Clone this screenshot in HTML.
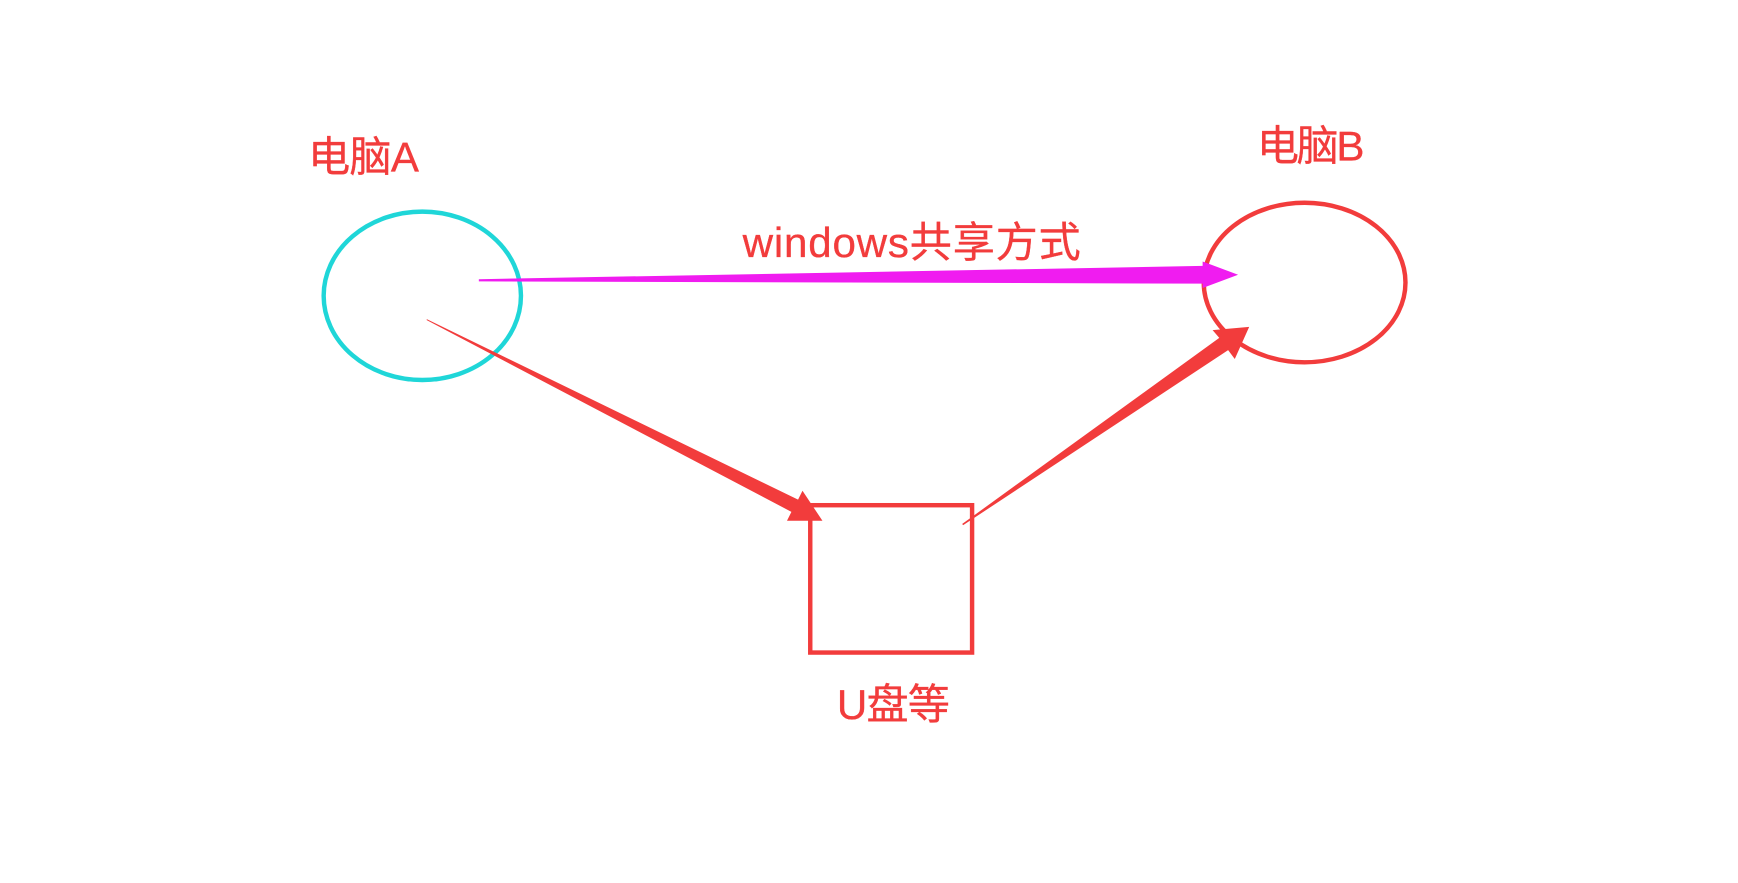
<!DOCTYPE html>
<html><head><meta charset="utf-8"><style>
html,body{margin:0;padding:0;background:#fff;width:1738px;height:883px;overflow:hidden}
svg{display:block}
text{font-family:"Liberation Sans","Noto Sans CJK SC",sans-serif;fill:#f23c3c;font-size:38px;stroke:#f23c3c;stroke-width:0.3}
</style></head><body>
<svg width="1738" height="883" viewBox="0 0 1568 797" preserveAspectRatio="none">
<rect width="1568" height="797" fill="#fff"/>
<text x="278" y="155" textLength="100" lengthAdjust="spacing">电脑A</text>
<text x="1134" y="145" textLength="97" lengthAdjust="spacing">电脑B</text>
<text x="670" y="232" textLength="305" lengthAdjust="spacing">windows共享方式</text>
<text x="755" y="649" textLength="102" lengthAdjust="spacing">U盘等</text>
<ellipse cx="381" cy="267" rx="89" ry="76" fill="none" stroke="#1fd6d8" stroke-width="4"/>
<ellipse cx="1177" cy="255" rx="91" ry="72" fill="none" stroke="#f23c3c" stroke-width="4"/>
<rect x="731" y="456" width="146" height="133" fill="none" stroke="#f23c3c" stroke-width="4"/>
<polygon points="432,252 1085,240 1085,236 1117,248 1085,260 1085,256 432,254" fill="#f01cf0"/>
<polygon points="385,288 720,451 724,443 742,470 710,470 714,462 385,289" fill="#f23c3c"/>
<polygon points="868,473 1100,305 1094,298 1127,295 1114,324 1108,316 869,474" fill="#f23c3c"/>
</svg>
</body></html>
